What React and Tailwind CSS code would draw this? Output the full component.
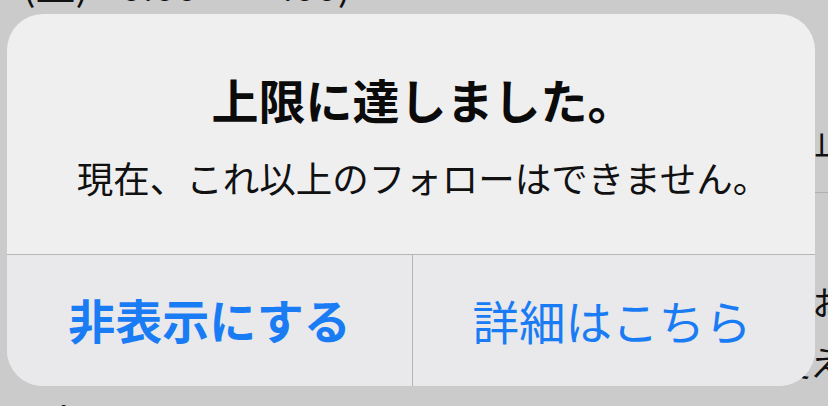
const font = { fontFamily: '"Noto Sans CJK JP", "Noto Sans", sans-serif' };

const LimitAlert = ({ onHide, onMore }) => {
  return (
    <div className="absolute left-[7px] top-[14px] w-[808px] h-[372px] rounded-[36px] overflow-hidden flex flex-col bg-[#efeff0]">
      {/* Message */}
      <div className="h-[240px] flex flex-col items-center pt-[55px] pl-[24px]">
        <h2 className="text-[47px] leading-[60px] font-bold text-[#0b0b0b]">上限に達しました。</h2>
        <p className="mt-[27px] text-[36.5px] leading-[44px] text-[#111]">現在、これ以上のフォローはできません。</p>
      </div>

      {/* Actions */}
      <div className="flex-1 flex border-t border-[#b6b6b8] bg-[#e9e9eb]">
        <button
          onClick={onHide}
          className="w-[405px] flex items-center justify-center text-[47px] font-bold text-[#1a7cf5] pb-[2px]"
        >
          非表示にする
        </button>
        <div className="w-px bg-[#b6b6b8]" />
        <button
          onClick={onMore}
          className="flex-1 flex items-center justify-center text-[46.5px] text-[#1a7cf5] pb-[2px]"
        >
          <span className="mr-[4px]">詳細はこちら</span>
        </button>
      </div>
    </div>
  );
};

export default function App() {
  return (
    <div className="relative w-[828px] h-[406px] overflow-hidden bg-[#cbcbcb]" style={font}>
      {/* Page behind the dimmed overlay */}
      <div className="flex h-full">
        <div className="flex-1 flex flex-col justify-between">
          <div className="mt-[-38px] pl-[22px] text-[40px] leading-[42px] text-[#111] whitespace-nowrap">
            (土) 10:00〜12:00)
          </div>
          <div className="mb-[-30px] pl-[50px] text-[36px] leading-[38px] text-[#111]">ト</div>
        </div>
        <div className="w-[40px] flex flex-col pt-[122px] text-[34px] leading-[38px] text-[#111] whitespace-nowrap">
          <div className="ml-[-8px]">中止</div>
          <div className="mt-[32px] h-px bg-[#b0b0b0]" />
          <div className="mt-[90px] ml-[-10px]">まお</div>
          <div className="mt-[22px] ml-[-12px]">支え</div>
        </div>
      </div>

      <LimitAlert onHide={() => {}} onMore={() => {}} />
    </div>
  );
}
